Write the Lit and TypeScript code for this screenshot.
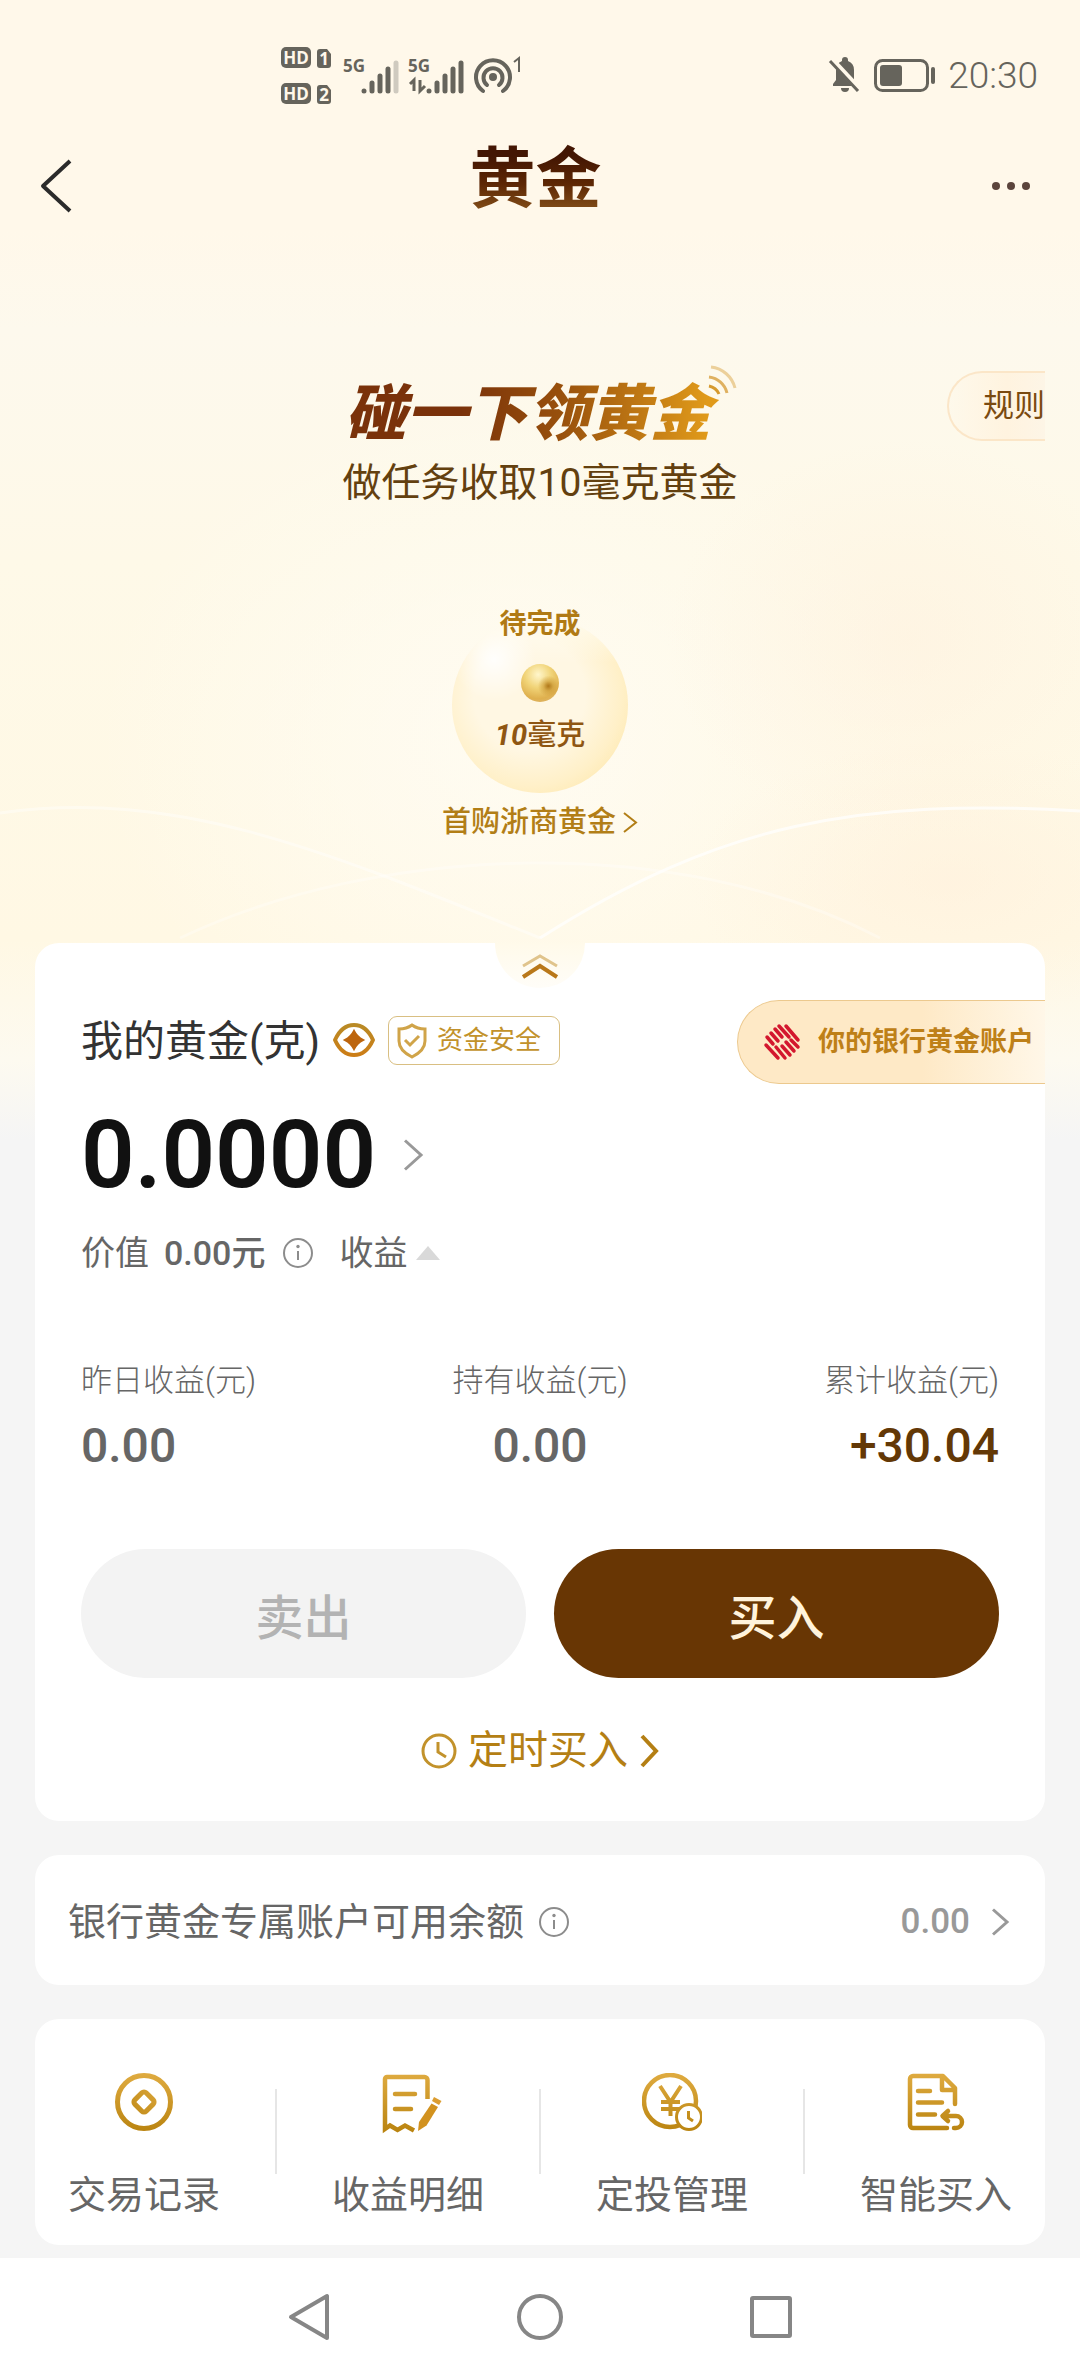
import { LitElement, html, css, svg } from "lit";
import { customElement, property } from "lit/decorators.js";

const goldDefs = (id: string) => svg`
  <defs>
    <linearGradient id=${id} x1="0" y1="0" x2="0" y2="60" gradientUnits="userSpaceOnUse">
      <stop offset="0" stop-color="#dfab40" />
      <stop offset="1" stop-color="#b9830f" />
    </linearGradient>
  </defs>`;

const coinIcon = html`
  <svg width="60" height="60" viewBox="0 0 60 60" fill="none" aria-hidden="true">
    ${goldDefs("g1")}
    <circle cx="30" cy="29" r="26.5" stroke="url(#g1)" stroke-width="5" />
    <rect x="22" y="21" width="16" height="16" rx="3" transform="rotate(45 30 29)" stroke="url(#g1)" stroke-width="5" />
  </svg>`;

const receiptIcon = html`
  <svg width="60" height="60" viewBox="-4 0 60 60" fill="none" overflow="visible" aria-hidden="true">
    ${goldDefs("g2")}
    <path d="M45.5 26V7a3 3 0 0 0-3-3H5a2 2 0 0 0-2 2v50l5-3.500 7.500 4.500 7.500-4.500 9 5" stroke="url(#g2)" stroke-width="4.500" />
    <path d="M13 21H33M13 36H29" stroke="url(#g2)" stroke-width="4.500" stroke-linecap="round" />
    <path d="M49.500 30.500L56 34 44.500 52.500 36 58 37 49Z" fill="#d2921f" />
    <path d="M52 24L59.500 28 57 32 50 28Z" fill="#dc9d30" />
  </svg>`;

const planIcon = html`
  <svg width="60" height="60" viewBox="0 0 60 60" fill="none" aria-hidden="true">
    ${goldDefs("g3")}
    <circle cx="28" cy="28" r="26" stroke="url(#g3)" stroke-width="4.500" />
    <path d="M18 13L28.500 29 39 13M28.500 29V43M19 29H38M19 36H38" stroke="url(#g3)" stroke-width="4" />
    <circle cx="47" cy="44" r="12.500" fill="#fff" stroke="url(#g3)" stroke-width="3" />
    <path d="M46.500 38V45L51 48" stroke="url(#g3)" stroke-width="3" />
  </svg>`;

const smartIcon = html`
  <svg width="60" height="60" viewBox="0 0 60 60" fill="none" aria-hidden="true">
    ${goldDefs("g4")}
    <g stroke="url(#g4)" stroke-width="4.500" stroke-linecap="round" stroke-linejoin="round">
      <path d="M41 55H7a3 3 0 0 1-3-3V6a3 3 0 0 1 3-3H37L49 15V31M36 4V17H48M12 18H24M12 29.500H36M12 41.500H29" />
      <path d="M38 43H50a6 6 0 0 1 0 12H48M42 38L36.500 43 42 48" />
    </g>
  </svg>`;

const infoIcon = html`
  <svg width="32" height="32" viewBox="0 0 32 32" fill="none" aria-hidden="true">
    <circle cx="16" cy="16" r="14" stroke="#8c8c8c" stroke-width="2" />
    <path d="M16 14V23" stroke="#8c8c8c" stroke-width="2" />
    <circle cx="16" cy="9.500" r="1.700" fill="#8c8c8c" />
  </svg>`;

@customElement("status-bar")
export class StatusBar extends LitElement {
  static styles = css`
    :host {
      display: flex;
      justify-content: space-between;
      align-items: center;
      padding: 44px 42px 0 277px;
      height: 64px;
      color: #66645c;
      font-family: Roboto, sans-serif;
    }
    .right {
      display: flex;
      align-items: center;
      gap: 12px;
    }
    .time {
      font-size: 37px;
      font-weight: 300;
      line-height: 44px;
    }
    text {
      font-family: "Open Sans", Roboto, sans-serif;
      font-weight: 700;
    }
  `;

  private bars(x: number, faded: boolean) {
    return [5, 13, 20, 27, 33].map(
      (h, i) => svg`<path d="M${x + i * 8} 57V${62 - h}" stroke-width="5" stroke-linecap="round"
        stroke=${faded && i === 4 ? "#cfcabf" : "#66645c"} />`
    );
  }

  render() {
    return html`
      <svg width="250" height="64" viewBox="0 10 250 64" fill="none" aria-hidden="true">
        ${[0, 36].map(
          (y, i) => svg`
          <rect x="4" y=${13 + y} width="30" height="21" rx="5" fill="#66645c" />
          <text x="19" y=${30 + y} font-size="17" text-anchor="middle" fill="#fff8ea">HD</text>
          <path d="M43 ${15 + y}H50L54 ${20 + y}V${31 + y}a3 3 0 0 1-3 3H43a3 3 0 0 1-3-3V${18 + y}a3 3 0 0 1 3-3Z" fill="#66645c" />
          <text x="47" y=${31 + y} font-size="17" text-anchor="middle" fill="#fff8ea">${i + 1}</text>`
        )}
        <text x="66" y="38" font-size="17" fill="#66645c">5G</text>
        ${this.bars(87, true)}
        <text x="131" y="38" font-size="17" fill="#66645c">5G</text>
        <path d="M133 50L137 46V57M143 46V57L148 52" stroke="#66645c" stroke-width="3" />
        ${this.bars(152, false)}
        <g stroke="#66645c" stroke-width="4" stroke-linecap="round">
          <path d="M206 57A17 17 0 1 1 226 57" />
          <path d="M210 51A9.500 9.500 0 1 1 222 51" />
        </g>
        <circle cx="216" cy="43" r="4" fill="#66645c" />
        <path d="M237 28L242 24V38" stroke="#66645c" stroke-width="2" />
      </svg>
      <div class="right">
        <svg width="108" height="40" viewBox="0 0 108 40" fill="none" aria-hidden="true">
          <path d="M5 30V28L8 24V14A9.500 9.500 0 0 1 14 5V4a3 3 0 0 1 6 0V5A9.500 9.500 0 0 1 26 14V24L29 28V30Z" fill="#66645c" />
          <path d="M13 32H21A4 4 0 0 1 13 32Z" fill="#66645c" />
          <path d="M3 3L32 34" stroke="#fff8ea" stroke-width="6" />
          <path d="M2 5L30 35" stroke="#66645c" stroke-width="3" />
          <rect x="47.500" y="4.500" width="52" height="30" rx="7" stroke="#66645c" stroke-width="3" />
          <rect x="52" y="9" width="22" height="21" rx="3" fill="#66645c" />
          <path d="M105 13V26" stroke="#66645c" stroke-width="4" stroke-linecap="round" />
        </svg>
        <span class="time">20:30</span>
      </div>
    `;
  }
}

@customElement("chevron-right")
export class ChevronRight extends LitElement {
  @property({ type: Number }) width = 12;
  @property({ type: Number }) height = 22;
  @property({ type: Number }) weight = 3;
  static styles = css`
    :host {
      display: inline-flex;
    }
  `;
  render() {
    const { width: w, height: h, weight: s } = this;
    return html`<svg width=${w} height=${h} viewBox="0 0 ${w} ${h}" fill="none" aria-hidden="true">
      <path d="M${s} ${s / 2}L${w - s} ${h / 2}L${s} ${h - s / 2}" stroke="currentColor" stroke-width=${s} />
    </svg>`;
  }
}

@customElement("app-root")
export class AppRoot extends LitElement {
  static styles = css`
    :host {
      display: flex;
      flex-direction: column;
      min-height: 100vh;
      overflow: hidden;
      font-family: Roboto, "Noto Sans CJK SC", sans-serif;
      color: #666;
      background:
        radial-gradient(240px 200px at 84% 640px, rgba(255, 240, 222, 0.5), rgba(255, 240, 222, 0)),
        radial-gradient(260px 140px at 88% 880px, rgba(255, 238, 218, 0.5), rgba(255, 238, 218, 0)),
        radial-gradient(420px 340px at 48% 740px, rgba(255, 252, 243, 0.9), rgba(255, 252, 243, 0)),
        linear-gradient(
          #fff8ea 0,
          #fff8ea 230px,
          #fdf9ed 330px,
          #fef9e8 560px,
          #fff8e4 940px,
          #fdfaf0 1060px,
          #f5f5f5 1140px
        );
    }
    button {
      margin: 0;
      padding: 0;
      border: 0;
      background: none;
      font: inherit;
      color: inherit;
    }
    a {
      color: inherit;
      text-decoration: none;
    }
    h1,
    h2,
    p,
    dl,
    dd {
      margin: 0;
      font-weight: 400;
    }
    svg {
      flex: none;
      display: block;
    }
    .header {
      display: grid;
      grid-template-columns: 1fr auto 1fr;
      align-items: center;
      padding: 4px 47px 0 38px;
      height: 136px;
      color: #2b2626;
    }
    .header button {
      padding-top: 12px;
    }
    .more {
      justify-self: end;
    }
    .title {
      font-size: 66px;
      line-height: 80px;
      font-weight: 700;
      color: transparent;
      background: linear-gradient(#431603 20%, #5d2704 55%, #84501a 90%);
      -webkit-background-clip: text;
      background-clip: text;
    }
    .hero {
      position: relative;
      display: flex;
      flex-direction: column;
      align-items: center;
      padding: 126px 35px 101px;
    }
    .waves {
      position: absolute;
      left: 0;
      bottom: 0;
      width: 100%;
      height: 150px;
    }
    .rules {
      position: absolute;
      top: 123px;
      right: 35px;
      padding-left: 34px;
      border: 2px solid #fbe6c8;
      border-right: 0;
      border-radius: 36px 0 0 36px;
      font-size: 31px;
      line-height: 66px;
      color: #7a4a10;
      background: linear-gradient(90deg, rgba(255, 248, 234, 0.3), #fff3df 60%, #fdf5e6);
    }
    .slogan {
      position: relative;
    }
    .slogan h2 {
      padding: 0 28px 0 4px;
      font-size: 61px;
      line-height: 80px;
      font-weight: 900;
      font-style: italic;
      color: transparent;
      background: linear-gradient(90deg, #7a320a 30%, #98500c 55%, #e09a1a 92%);
      -webkit-background-clip: text;
      background-clip: text;
    }
    .signal {
      position: absolute;
      top: -12px;
      right: 0;
    }
    .sub {
      margin-top: 1px;
      font-size: 39px;
      line-height: 56px;
      color: #63400f;
    }
    .bubble {
      position: relative;
      display: flex;
      flex-direction: column;
      align-items: center;
      box-sizing: border-box;
      width: 176px;
      height: 176px;
      margin-top: 106px;
      padding-top: 47px;
      border-radius: 50%;
      background:
        radial-gradient(circle at 24% 24%, rgba(255, 255, 255, 0.9), rgba(255, 255, 255, 0) 22%),
        linear-gradient(rgba(255, 252, 240, 1) 0, rgba(255, 252, 240, 0) 26%),
        radial-gradient(circle at 44% 44%, #fff7e3 40%, #fff0c8 66%, #feeab4 80%);
    }
    .state {
      position: absolute;
      top: -13px;
      left: 0;
      right: 0;
      text-align: center;
      font-size: 27px;
      line-height: 40px;
      font-weight: 700;
      color: #b07a14;
    }
    .ball {
      width: 38px;
      height: 38px;
      border-radius: 50%;
      background:
        radial-gradient(circle at 72% 58%, #b0781a 0, rgba(196, 142, 40, 0.5) 14%, rgba(200, 150, 40, 0) 30%),
        radial-gradient(circle at 45% 28%, #fff6cc 0, #f1d478 38%, #dfb04e 70%, #dcb880 100%);
    }
    .amount {
      margin-top: 13px;
      font-size: 29px;
      line-height: 40px;
      font-weight: 500;
      color: #8f5612;
    }
    .amount i {
      font-weight: 700;
    }
    .task {
      display: flex;
      align-items: center;
      gap: 6px;
      margin-top: 9px;
      font-size: 29px;
      line-height: 40px;
      font-weight: 500;
      color: #b27e16;
    }
    .card {
      position: relative;
      margin: 0 35px;
      border-radius: 24px;
      background: #fff;
    }
    .card + .card {
      margin-top: 34px;
    }
    .holding {
      padding: 57px 46px 40px;
    }
    .fold {
      position: absolute;
      top: 0;
      left: calc(50% - 45px);
      width: 90px;
      height: 45px;
      display: flex;
      justify-content: center;
      align-items: center;
      border-radius: 0 0 45px 45px;
      background: linear-gradient(#fffaea, #fffdf8);
    }
    .top {
      display: flex;
      align-items: center;
      height: 84px;
      margin-right: -46px;
    }
    .name {
      font-size: 42px;
      line-height: 60px;
      color: #333;
    }
    .eye {
      margin: 0 12px 4px;
    }
    .safe {
      display: flex;
      align-items: center;
      gap: 10px;
      margin-bottom: 3px;
      padding: 0 18px 0 8px;
      border: 1px solid #d9bf82;
      border-radius: 9px;
      font-size: 26px;
      line-height: 47px;
      color: #c2922b;
    }
    .bank {
      display: flex;
      align-items: center;
      gap: 17px;
      margin-left: auto;
      padding: 0 11px 0 25px;
      border: 1px solid #ecc98e;
      border-right: 0;
      border-radius: 42px 0 0 42px;
      font-size: 27px;
      line-height: 82px;
      font-weight: 700;
      color: #be8018;
      background: linear-gradient(90deg, #fee9c6 60%, #fff7e8);
    }
    .total {
      display: flex;
      align-items: center;
      gap: 26px;
      margin-top: 21px;
      font-size: 94px;
      line-height: 100px;
      font-weight: 600;
      color: #111;
    }
    .total chevron-right {
      color: #999;
    }
    .worth {
      display: flex;
      align-items: center;
      margin-top: 24px;
      font-size: 34px;
      line-height: 48px;
    }
    .worth b {
      margin: 0 17px 0 15px;
      font-weight: 500;
    }
    .profit {
      display: flex;
      align-items: center;
      gap: 9px;
      margin-left: 25px;
    }
    .stats {
      display: grid;
      grid-template-columns: 1fr 1fr 1fr;
      margin-top: 82px;
    }
    .stats div:nth-child(2) {
      text-align: center;
    }
    .stats div:nth-child(3) {
      text-align: right;
    }
    .stats dt {
      font-size: 31px;
      line-height: 44px;
      font-weight: 300;
    }
    .stats dd {
      margin-top: 13px;
      font-size: 48px;
      line-height: 60px;
      font-weight: 500;
    }
    .stats .gain {
      color: #633806;
    }
    .actions {
      display: grid;
      grid-template-columns: 1fr 1fr;
      gap: 28px;
      margin-top: 73px;
    }
    .actions button {
      height: 129px;
      border-radius: 65px;
      font-size: 48px;
      font-weight: 500;
    }
    .actions .sell {
      color: #b3b3b3;
      background: #f3f3f3;
    }
    .actions .buy {
      color: #fff3dc;
      background: #683604;
    }
    .timed {
      display: flex;
      justify-content: center;
      align-items: center;
      gap: 10px;
      margin-top: 43px;
      font-size: 40px;
      line-height: 60px;
      color: #b47f14;
    }
    .balance {
      display: flex;
      align-items: center;
      gap: 14px;
      padding: 42px 35px 38px 33px;
      font-size: 38px;
      line-height: 50px;
    }
    .balance b {
      margin-left: auto;
      font-size: 35px;
      font-weight: 500;
      color: #999;
    }
    .balance chevron-right {
      margin-left: 6px;
      color: #999;
    }
    .tools {
      display: flex;
      justify-content: space-between;
      padding: 54px 33px 25px;
    }
    .tools a {
      display: flex;
      flex-direction: column;
      align-items: center;
      gap: 37px;
      font-size: 38px;
      line-height: 50px;
    }
    .divider {
      width: 2px;
      height: 85px;
      margin-top: 16px;
      background: #e6e6e6;
    }
    .nav {
      display: flex;
      justify-content: center;
      align-items: center;
      gap: 182px;
      height: 118px;
      margin-top: 13px;
      background: #fff;
    }
    .foot {
      flex: 1;
      background: #fff;
    }
  `;

  private tools = [
    { icon: coinIcon, label: "交易记录" },
    { icon: receiptIcon, label: "收益明细" },
    { icon: planIcon, label: "定投管理" },
    { icon: smartIcon, label: "智能买入" },
  ];

  render() {
    return html`
      <status-bar></status-bar>
      <header class="header">
        <button aria-label="返回">
          <svg width="36" height="54" viewBox="0 0 36 54" fill="none">
            <path d="M32 2L5 27L32 52" stroke="#2b2b2b" stroke-width="4" stroke-linejoin="round" />
          </svg>
        </button>
        <h1 class="title">黄金</h1>
        <button class="more" aria-label="更多">
          <svg width="44" height="54" viewBox="0 0 44 54" fill="#5b443c">
            <circle cx="7" cy="27" r="4" />
            <circle cx="22" cy="27" r="4" />
            <circle cx="37" cy="27" r="4" />
          </svg>
        </button>
      </header>

      <section class="hero">
        <svg class="waves" viewBox="0 0 1080 150" preserveAspectRatio="none" fill="none" aria-hidden="true">
          <path d="M0 20C180 -5 330 60 540 145" stroke="#fff" stroke-opacity=".4" stroke-width="3" />
          <path d="M540 145C720 30 860 5 1080 18" stroke="#fff" stroke-opacity=".7" stroke-width="3" />
          <path d="M180 145C380 50 680 40 880 145" stroke="#fff" stroke-opacity=".3" stroke-width="3" />
        </svg>
        <button class="rules">规则</button>
        <div class="slogan">
          <h2>碰一下领黄金</h2>
          <svg class="signal" width="34" height="34" viewBox="0 0 34 34" fill="none" aria-hidden="true">
            <path d="M4 24A14 14 0 0 1 14 32" stroke="#d69a2e" stroke-width="3" />
            <path d="M4 15A21 21 0 0 1 22 31" stroke="#dfb160" stroke-width="3" />
            <path d="M6 5A28 28 0 0 1 30 26" stroke="#ecd09a" stroke-width="3" />
          </svg>
        </div>
        <p class="sub">做任务收取10毫克黄金</p>
        <div class="bubble">
          <span class="state">待完成</span>
          <span class="ball"></span>
          <span class="amount"><i>10</i>毫克</span>
        </div>
        <a class="task" href="#task">首购浙商黄金<chevron-right .width=${16} .height=${21} .weight=${2}></chevron-right></a>
      </section>

      <section class="card holding">
        <button class="fold" aria-label="收起">
          <svg width="40" height="26" viewBox="0 0 40 26" fill="none">
            <path d="M3 13L20 3L37 13" stroke="#e0c48c" stroke-width="3" />
            <path d="M3 24L20 13L37 24" stroke="#b9781a" stroke-width="4" />
          </svg>
        </button>
        <div class="top">
          <h2 class="name">我的黄金(克)</h2>
          <button class="eye" aria-label="隐藏金额">
            <svg width="44" height="38" viewBox="0 0 44 38" fill="none">
              <defs>
                <linearGradient id="eye" x1="0" y1="0" x2="0" y2="1">
                  <stop offset="0" stop-color="#b98a25" />
                  <stop offset="1" stop-color="#cc7d16" />
                </linearGradient>
              </defs>
              <path d="M3 19C12 -1 32 -1 41 19C32 39 12 39 3 19Z" stroke="url(#eye)" stroke-width="4" stroke-linejoin="round" />
              <path d="M22 10Q25 16 31 19Q25 22 22 28Q19 22 13 19Q19 16 22 10Z" fill="#bd650e" stroke="#bd650e" stroke-width="2" />
            </svg>
          </button>
          <button class="safe">
            <svg width="30" height="36" viewBox="0 0 30 36" fill="none" aria-hidden="true">
              <path d="M15 2C19 5 23 6 28 6V18C28 26 21 31 15 34C9 31 2 26 2 18V6C7 6 11 5 15 2Z" stroke="#d0a449" stroke-width="3" />
              <path d="M8 17L13 22L22 13" stroke="#d0a449" stroke-width="3" />
            </svg>
            资金安全
          </button>
          <button class="bank">
            <svg width="38" height="38" viewBox="0 0 38 38" fill="none" stroke="#d3172e" stroke-width="3.500" stroke-linecap="round" aria-hidden="true">
              <path d="M4 14L10 21M8 10L15 18M12 6L19 14M16 3L26 14M23 3L35 17" />
              <path d="M3 22L15 35M13 24L22 35M19 23L27 32M23 19L31 28M28 17L35 24" />
            </svg>
            你的银行黄金账户
          </button>
        </div>
        <div class="total">
          0.0000
          <chevron-right .width=${22} .height=${32} .weight=${3}></chevron-right>
        </div>
        <div class="worth">
          价值 <b>0.00元</b> ${infoIcon}
          <button class="profit">
            收益
            <svg width="24" height="14" viewBox="0 0 24 14" aria-hidden="true"><path d="M12 0L24 14H0Z" fill="#d9d9d9" /></svg>
          </button>
        </div>
        <dl class="stats">
          <div><dt>昨日收益(元)</dt><dd>0.00</dd></div>
          <div><dt>持有收益(元)</dt><dd>0.00</dd></div>
          <div><dt>累计收益(元)</dt><dd class="gain">+30.04</dd></div>
        </dl>
        <div class="actions">
          <button class="sell">卖出</button>
          <button class="buy">买入</button>
        </div>
        <a class="timed" href="#timed">
          <svg width="38" height="38" viewBox="0 0 38 38" fill="none" stroke="#c2922b" stroke-width="3" aria-hidden="true">
            <circle cx="19" cy="19" r="16" />
            <path d="M18 10V20L26 25" />
          </svg>
          定时买入
          <chevron-right .width=${22} .height=${34} .weight=${4}></chevron-right>
        </a>
      </section>

      <section class="card balance">
        <span>银行黄金专属账户可用余额</span>
        ${infoIcon}
        <b>0.00</b>
        <chevron-right .width=${20} .height=${28} .weight=${3}></chevron-right>
      </section>

      <section class="card tools">
        ${this.tools.map(
          (t, i) => html`
            ${i ? html`<span class="divider"></span>` : ""}
            <a href="#tool">${t.icon}<span>${t.label}</span></a>
          `
        )}
      </section>

      <nav class="nav">
        <button aria-label="后退">
          <svg width="48" height="50" viewBox="0 0 48 50" fill="none">
            <path d="M42 4V46L6 25Z" stroke="#868686" stroke-width="4" stroke-linejoin="round" />
          </svg>
        </button>
        <button aria-label="主页">
          <svg width="50" height="50" viewBox="0 0 50 50" fill="none">
            <circle cx="25" cy="25" r="21" stroke="#868686" stroke-width="4" />
          </svg>
        </button>
        <button aria-label="最近任务">
          <svg width="48" height="50" viewBox="0 0 48 50" fill="none">
            <rect x="5" y="6" width="38" height="38" rx="1" stroke="#868686" stroke-width="4" />
          </svg>
        </button>
      </nav>
      <div class="foot"></div>
    `;
  }
}
